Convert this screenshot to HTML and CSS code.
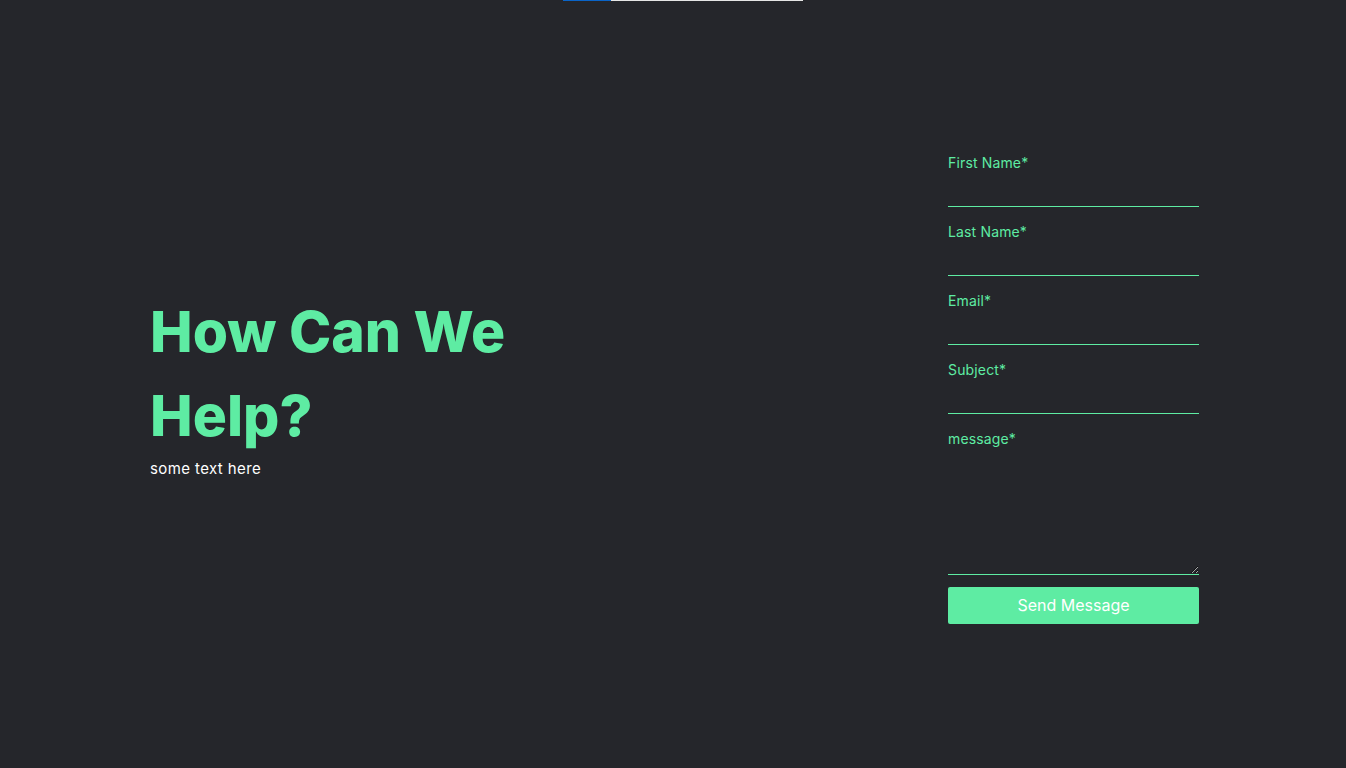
FILE: index.html
```html
<!DOCTYPE html>
<html lang="en">
<head>
<meta charset="utf-8">
<title>Contact</title>
<link rel="stylesheet" href="styles.css">
</head>
<body>
<div class="topbar"><span class="topbar-fill"></span></div>
<main class="contact">
  <section class="intro">
    <h1 class="intro-title">How Can We Help?</h1>
    <p class="intro-text">some text here</p>
  </section>
  <form class="form">
    <label class="field">
      <span class="field-label">First Name*</span>
      <input class="field-input" type="text">
    </label>
    <label class="field">
      <span class="field-label">Last Name*</span>
      <input class="field-input" type="text">
    </label>
    <label class="field">
      <span class="field-label">Email*</span>
      <input class="field-input" type="email">
    </label>
    <label class="field">
      <span class="field-label">Subject*</span>
      <input class="field-input" type="text">
    </label>
    <label class="field">
      <span class="field-label">message*</span>
      <textarea class="field-area"></textarea>
    </label>
    <button class="send" type="button">Send Message</button>
  </form>
</main>
</body>
</html>
```

FILE: styles.css
```css
* { box-sizing: border-box; }

html, body {
  margin: 0;
  padding: 0;
  background: #25262b;
  font-family: "Inter", "Noto Sans", sans-serif;
  overflow: hidden;
}

.topbar {
  height: 1px;
  width: 240px;
  margin-left: 563px;
  background: #e6e6e6;
  display: flex;
}

.topbar-fill {
  width: 48px;
  background: #0a64c8;
}

.contact {
  height: 767px;
  display: flex;
  align-items: center;
  justify-content: space-between;
  padding: 0 147px 0 150px;
}

.intro {
  width: 400px;
}

.intro-title {
  margin: 0;
  font-size: 57px;
  line-height: 84px;
  font-weight: 800;
  color: #5eeca3;
  letter-spacing: 0;
}

.intro-text {
  margin: 0;
  font-size: 15px;
  line-height: 22px;
  color: #ffffff;
  letter-spacing: 0.4px;
}

.form {
  width: 251px;
  display: flex;
  flex-direction: column;
  padding-top: 6px;
}

.field {
  display: flex;
  flex-direction: column;
  margin-bottom: 14px;
}

.field-label {
  font-size: 14px;
  line-height: 21px;
  color: #5eeca3;
  letter-spacing: 0.15px;
}

.field-input,
.field-area {
  display: block;
  width: 100%;
  background: transparent;
  border: none;
  border-bottom: 1px solid #5eeca3;
  color: #fff;
  font: inherit;
  outline: none;
  padding: 0;
}

.field-input {
  height: 34px;
}

.field-area {
  height: 126px;
  resize: vertical;
}

.field:last-of-type {
  margin-bottom: 12px;
}

.send {
  height: 37px;
  border: none;
  border-radius: 2px;
  background: #5eeca3;
  color: #ffffff;
  font-family: inherit;
  font-size: 16px;
  cursor: pointer;
}
```
